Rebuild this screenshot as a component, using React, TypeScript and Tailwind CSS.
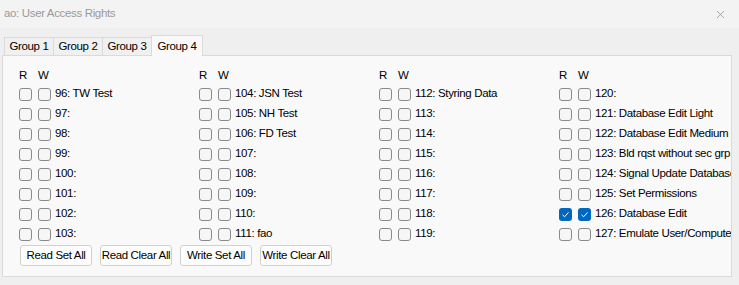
import { X } from 'lucide-react'

type Item = { id: number; name: string; r?: boolean; w?: boolean }

const columns: Item[][] = [
  [
    { id: 96, name: 'TW Test' },
    { id: 97, name: '' },
    { id: 98, name: '' },
    { id: 99, name: '' },
    { id: 100, name: '' },
    { id: 101, name: '' },
    { id: 102, name: '' },
    { id: 103, name: '' },
  ],
  [
    { id: 104, name: 'JSN Test' },
    { id: 105, name: 'NH Test' },
    { id: 106, name: 'FD Test' },
    { id: 107, name: '' },
    { id: 108, name: '' },
    { id: 109, name: '' },
    { id: 110, name: '' },
    { id: 111, name: 'fao' },
  ],
  [
    { id: 112, name: 'Styring Data' },
    { id: 113, name: '' },
    { id: 114, name: '' },
    { id: 115, name: '' },
    { id: 116, name: '' },
    { id: 117, name: '' },
    { id: 118, name: '' },
    { id: 119, name: '' },
  ],
  [
    { id: 120, name: '' },
    { id: 121, name: 'Database Edit Light' },
    { id: 122, name: 'Database Edit Medium' },
    { id: 123, name: 'Bld rqst without sec grp' },
    { id: 124, name: 'Signal Update Database' },
    { id: 125, name: 'Set Permissions' },
    { id: 126, name: 'Database Edit', r: true, w: true },
    { id: 127, name: 'Emulate User/Computer' },
  ],
]

const tabs = ['Group 1', 'Group 2', 'Group 3', 'Group 4']
const buttons = ['Read Set All', 'Read Clear All', 'Write Set All', 'Write Clear All']

function Check({ checked }: { checked?: boolean }) {
  if (checked) {
    return (
      <span className="flex h-[13px] w-[13px] shrink-0 items-center justify-center rounded-[3px] bg-[#0067c0]">
        <svg width="9" height="9" viewBox="0 0 9 9">
          <path d="M1.5 4.8 L3.6 6.8 L7.5 2.4" fill="none" stroke="#fff" strokeWidth="1" />
        </svg>
      </span>
    )
  }
  return <span className="h-[13px] w-[13px] shrink-0 rounded-[3px] border border-[#8a8a8a] bg-[#f6f6f6]" />
}

export default function App() {
  return (
    <div className="h-[285px] w-[739px] overflow-hidden bg-[#efefef] text-[11.5px] tracking-[-0.35px] text-black [font-family:'Liberation_Sans',Arial,sans-serif]">
      {/* Title bar */}
      <div className="flex h-[28px] items-center justify-between bg-[#f3f3f3] pl-[4px] pr-[12px]">
        <span className="text-[11.5px] text-[#9a9a9a]">ao: User Access Rights</span>
        <X size={13} strokeWidth={1.3} className="text-[#8c8c8c]" />
      </div>

      {/* Tabs */}
      <div className="mx-[2px] mt-[7px] flex items-end pl-[2px]">
        {tabs.map((t, i) =>
          i === 3 ? (
            <div
              key={t}
              className="relative z-10 -mb-px flex h-[21px] w-[52px] items-start justify-center border border-b-0 border-[#dadada] bg-[#f9f9f9] pt-[2px]"
            >
              {t}
            </div>
          ) : (
            <div
              key={t}
              className="-mr-px flex h-[18px] w-[50px] items-center justify-center border border-b-0 border-[#dadada] bg-[#f0f0f0]"
            >
              {t}
            </div>
          )
        )}
      </div>

      {/* Panel */}
      <div className="mx-[2px] h-[222px] w-[730px] overflow-hidden border border-[#dadada] bg-[#f9f9f9] pl-[16px] pt-[12px]">
        <div className="flex">
          {columns.map((col, ci) => (
            <div key={ci} className="w-[180px] shrink-0 overflow-hidden">
              <div className="flex h-[16px] items-center">
                <span className="w-[19px]">R</span>
                <span>W</span>
              </div>
              {col.map((item) => (
                <div key={item.id} className="flex h-[20px] items-center whitespace-nowrap">
                  <Check checked={item.r} />
                  <span className="w-[6px]" />
                  <Check checked={item.w} />
                  <span className="ml-[4px]">
                    {item.id}:{item.name ? ' ' + item.name : ''}
                  </span>
                </div>
              ))}
            </div>
          ))}
        </div>
        <div className="mt-[1px] flex gap-[8px] pl-[1px]">
          {buttons.map((b) => (
            <button
              key={b}
              className="flex h-[21px] w-[72px] items-center justify-center rounded-[3px] border border-[#d0d0d0] bg-[#fdfdfd] whitespace-nowrap"
            >
              {b}
            </button>
          ))}
        </div>
      </div>
    </div>
  )
}
